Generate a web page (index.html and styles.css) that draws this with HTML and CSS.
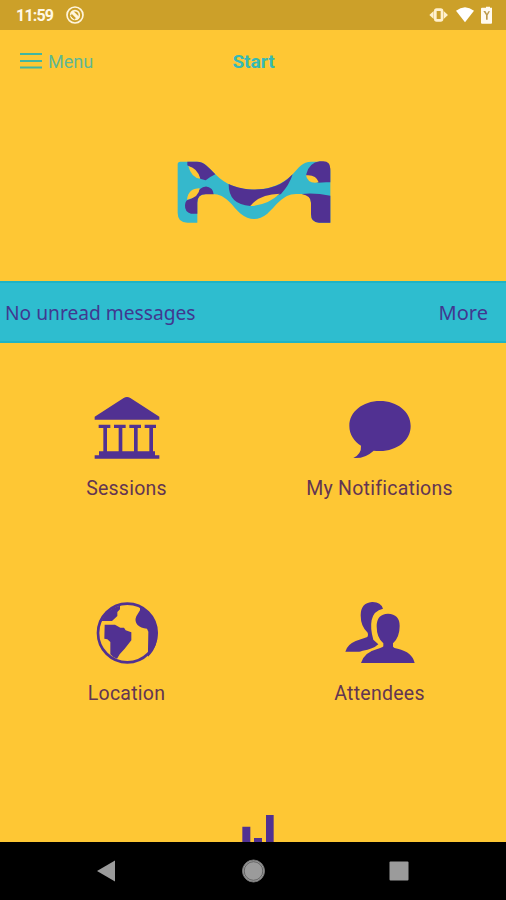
FILE: index.html
```
<!DOCTYPE html>
<html lang="en">
<head>
    <meta charset="utf-8">
    <title>Start</title>
    <link rel="stylesheet" href="styles.css">
</head>
<body>
    <div class="status">
        <span class="time">11:59</span>
        <svg class="app-icon" viewBox="0 0 54 54">
            <circle cx="27" cy="27" r="24" fill="none" stroke="#fff5dc" stroke-width="5"/>
            <circle cx="27" cy="27" r="13" fill="none" stroke="#fff5dc" stroke-width="5"/>
            <path d="M17 17L38 38" stroke="#fff5dc" stroke-width="9"/>
            <path d="M14 27L27 40" stroke="#cca029" stroke-width="4"/>
        </svg>
        <svg class="status-icons" viewBox="0 0 192 54">
            <path d="M4 27l13-12v24zM60 27l-13-12v24z" fill="#fff0cd"/>
            <rect x="22" y="11" width="20" height="32" rx="4" fill="none" stroke="#fff0cd" stroke-width="8"/>
            <path d="M84 14Q111-7 138 14L111 49z" fill="#fff"/>
            <path d="M168 5h6V2h12v3h6v46q0 2-3 2h-27q-3 0-3-3V8q0-3 3-3z" fill="#fffaf0"/>
            <path d="M166 15l8 12v14h5V28l7-12h-5l-4 7-5-8z" fill="#bd9a4c"/>
        </svg>
    </div>

    <div class="header">
        <div class="menu">
            <svg class="burger" viewBox="0 0 22 16">
                <path d="M0 1h22M0 8h22M0 14.500h22" stroke="#42b6a0" stroke-width="2"/>
            </svg>
            <span>Menu</span>
        </div>
        <h1>Start</h1>
    </div>

    <div class="logo">
        <svg viewBox="0 0 540 255">
            <path fill="#35b8cc" d="M49 35H99C121 35 136 54 154 73C185 106 228 119 270 119C312 119 354 106 386 73C405 52 415 35 442 35H472Q499 35 499 62V218H465Q441 218 441 192V158Q441 132 413 132H396C355 132 335 170 310 191Q290 207 270 207Q250 207 230 191C205 170 188 132 145 132H127Q100 132 100 158V218H70Q41 218 41 189V43Q41 35 49 35Z"/>
            <path fill="#513192" d="M70 35H99C121 35 136 54 154 73Q139 80 125 91L108 86Q100 60 70 46Z"/>
            <path fill="#fec734" d="M73 48Q101 55 109 86Q82 84 73 48Z"/>
            <path fill="#513192" d="M107 118Q126 101 143 117Q148 123 149 133H127Q100 132 100 158V191H81Q62 187 63 166Q64 148 78 148Q94 141 107 118Z"/>
            <path fill="#fec734" d="M69 149Q73 115 107 115Q105 143 69 149Z"/>
            <path fill="#513192" d="M194 102C240 124 319 129 370 88L386 73Q376 105 351 132L259 168Q193 164 194 102Z"/>
            <path fill="#fec734" d="M259 168Q287 132 347 131Q312 165 259 168Z"/>
            <path fill="#513192" d="M427 72Q436 38 467 34H478Q499 35 499 56V97Q480 96 462 98L427 77Z"/>
            <path fill="#fec734" d="M426 76Q456 73 464 97Q431 103 426 76Z"/>
            <path fill="#513192" d="M413 132Q452 128 499 137V218H465Q441 218 441 192V158Q441 137 413 132Z"/>
        </svg>
    </div>

    <div class="messages">
        <span class="unread">No unread messages</span>
        <span>More</span>
    </div>

    <div class="tiles">
        <div class="tile">
            <svg viewBox="0 0 204 204">
                <path d="M92 6Q102 0 112 6L199 62V71H5V62ZM17 86h35v10h-10v70h-11V96H17zM63 86h35v10h-10v70H77V96H63zM109 86h35v10h-10v70h-11V96h-14zM155 86h34v10h-9v70h-11V96h-14zM18 166H186V178H199V188H5V178H18z"/>
            </svg>
            <span>Sessions</span>
        </div>
        <div class="tile">
            <svg viewBox="3 1 204 204">
                <path d="M105 16C157 16 197 48 197 91C197 134 157 166 105 166Q93 166 86 165Q59 190 25 187Q50 174 48 150C27 137 13 116 13 91C13 48 53 16 105 16Z"/>
            </svg>
            <span>My Notifications</span>
        </div>
        <div class="tile">
            <svg viewBox="1 1 204 204">
                <circle cx="104" cy="97" r="88" fill="none" stroke="#513192" stroke-width="8"/>
                <path d="M25 63Q43 24 82 15V26L74 34V46L58 61H25ZM134 15Q178 28 192 77Q201 137 166 168V148L167 93L163 84Q144 82 134 72Q125 61 131 47L142 29V20ZM36 72L67 72L83 81H94L99 89L116 95V119L96 144L81 161L73 174Q59 169 53 161V124L44 116L35 114Z"/>
            </svg>
            <span>Location</span>
        </div>
        <div class="tile">
            <svg viewBox="10 2 204 204">
                <path d="M88 5Q114 4 121 25Q93 31 87 59Q82 84 92 118L107 132Q91 147 60 151Q51 155 48 154H8Q14 132 39 122L72 111Q78 107 75 97Q54 79 54 45Q54 8 88 5Z"/>
                <path d="M136 40Q171 41 171 77Q171 111 151 129V139Q153 143 165 145Q209 155 216 188H55Q64 156 104 146Q119 142 122 138V129Q102 113 102 78Q102 41 136 40Z"/>
            </svg>
            <span>Attendees</span>
        </div>
        <div class="tile last">
            <svg viewBox="-4 -22 204 204">
                <path d="M66 40H90V204H66ZM101 74H125V204H101ZM137 5H160V204H137Z"/>
            </svg>
        </div>
    </div>

    <div class="navbar">
        <svg viewBox="0 0 506 58">
            <path d="M97 29L115 18.500V39.500Z" fill="#9b9b9b"/>
            <circle cx="253.500" cy="29" r="11" fill="#9b9b9b" stroke="#747474"/>
            <circle cx="253.500" cy="29" r="9.300" fill="none" stroke="#555" stroke-width=".8"/>
            <rect x="389.500" y="19.500" width="19" height="19" rx="1" fill="#9b9b9b"/>
        </svg>
    </div>
</body>
</html>
```
FILE: styles.css
```
body {
    margin: 0;
    width: 506px;
    height: 900px;
    overflow: hidden;
    display: flex;
    flex-direction: column;
    background-color: #fec734;
    font-family: Roboto, sans-serif;
    color: #513192;
}

svg {
    display: block;
    overflow: visible;
}

.status {
    height: 30px;
    flex: none;
    display: flex;
    align-items: center;
    padding: 0 14px 0 16px;
    box-sizing: border-box;
    background-color: #cca029;
}

.time {
    width: 37px;
    font-size: 16px;
    font-weight: 700;
    letter-spacing: -0.8px;
    color: #fff8e6;
}

.app-icon {
    width: 18px;
    height: 18px;
    margin-left: 13px;
}

.status-icons {
    width: 64px;
    height: 18px;
    margin-left: auto;
}

.header {
    height: 62px;
    flex: none;
    display: grid;
    grid-template-columns: 1fr auto 1fr;
    align-items: center;
    padding: 0 19px 0 20px;
}

.menu {
    display: flex;
    align-items: center;
    gap: 6px;
    font-size: 18px;
    color: #5eb794;
}

.burger {
    width: 22px;
    height: 16px;
}

h1 {
    margin: 0;
    font-size: 19px;
    font-weight: 700;
    color: #35b9b5;
}

.logo {
    height: 189px;
    flex: none;
    padding: 58px 0 0 164px;
    box-sizing: border-box;
}

.logo svg {
    width: 180px;
    height: 85px;
}

.messages {
    height: 62px;
    flex: none;
    display: flex;
    align-items: center;
    justify-content: space-between;
    padding: 0 18px 0 5px;
    box-sizing: border-box;
    border-top: 2px solid #1fb4c4;
    border-bottom: 2px solid #1fb4c4;
    background-color: #2ebdcf;
    font-family: "Noto Sans", sans-serif;
    font-size: 20px;
    color: #41388f;
}

.unread {
    font-size: 19.2px;
}

.tiles {
    flex: 1;
    min-height: 0;
    overflow: hidden;
    display: grid;
    grid-template-columns: 253px 253px;
    grid-auto-rows: 205px;
}

.tile {
    display: flex;
    flex-direction: column;
    align-items: center;
    padding-top: 53px;
    font-size: 19.5px;
    line-height: 24px;
    letter-spacing: 0.25px;
    font-variant-ligatures: none;
    color: #633552;
}

.tile svg {
    width: 68px;
    height: 68px;
    margin-bottom: 13px;
    fill: #513192;
}

.last {
    grid-column: 1 / 3;
}

.navbar {
    height: 58px;
    flex: none;
    background-color: #000;
}

.navbar svg {
    width: 506px;
    height: 58px;
}
```
